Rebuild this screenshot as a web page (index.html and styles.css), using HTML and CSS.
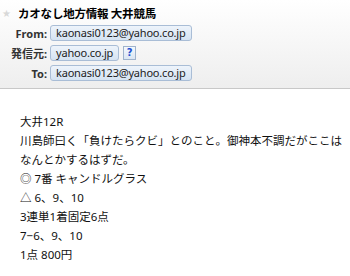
FILE: index.html
```html
<!DOCTYPE html>
<html lang="ja">
<head>
<meta charset="utf-8">
<link rel="stylesheet" href="styles.css">
</head>
<body>
<div class="header">
  <div class="subject"><span class="star">★</span><span class="title">カオなし地方情報 大井競馬</span></div>
  <div class="row"><span class="label">From:</span><span class="pill">kaonasi0123@yahoo.co.jp</span></div>
  <div class="row"><span class="label">発信元:</span><span class="pill">yahoo.co.jp</span><span class="help">?</span></div>
  <div class="row"><span class="label">To:</span><span class="pill">kaonasi0123@yahoo.co.jp</span></div>
</div>
<div class="body">
  <p>大井12R</p>
  <p>川島師曰く「負けたらクビ」とのこと。御神本不調だがここは</p>
  <p>なんとかするはずだ。</p>
  <p>◎ 7番 キャンドルグラス</p>
  <p>△ 6、9、10</p>
  <p>3連単1着固定6点</p>
  <p>7−6、9、10</p>
  <p>1点 800円</p>
</div>
</body>
</html>
```
FILE: styles.css
```css
html, body {
  margin: 0;
  padding: 0;
  background: #fff;
}
body {
  font-family: "Noto Sans", "Noto Sans CJK JP", sans-serif;
  color: #000;
  width: 350px;
  height: 276px;
  overflow: hidden;
}
.header {
  height: 88px;
  background: linear-gradient(#ffffff, #eeeeee);
  border-bottom: 1px solid #c8c8c8;
}
.subject {
  display: flex;
  align-items: center;
  height: 19px;
  padding: 4px 0 0 2px;
}
.star {
  color: #d8d8d8;
  font-size: 10px;
  width: 16px;
  line-height: 19px;
  font-family: "DejaVu Sans", sans-serif;
}
.title {
  font-family: "Noto Sans CJK JP", sans-serif;
  font-weight: bold;
  font-size: 11.5px;
  line-height: 19px;
  letter-spacing: -0.2px;
}
.row {
  display: flex;
  align-items: center;
  height: 20px;
}
.label {
  width: 47px;
  text-align: right;
  font-weight: bold;
  font-size: 11px;
  color: #333;
  padding-right: 3px;
  font-family: "Noto Sans", "Noto Sans CJK JP", sans-serif;
}
.pill {
  font-size: 11px;
  line-height: 14px;
  padding: 0 5px;
  letter-spacing: -0.2px;
  border: 1px solid #a9bdd6;
  border-radius: 3px;
  background: linear-gradient(#eef4fb, #d5e3f2);
  color: #222;
}
.help {
  margin-left: 4px;
  width: 11px;
  height: 12px;
  border: 1px solid #9fb3cc;
  background: linear-gradient(#f4f8fd, #dae6f3);
  color: #1f4fd0;
  font-weight: bold;
  font-size: 10px;
  line-height: 12px;
  text-align: center;
  font-family: "DejaVu Sans", sans-serif;
}
.body {
  padding: 23px 0 0 20px;
  font-family: "Noto Sans", "Noto Sans CJK JP", sans-serif;
  font-size: 11.5px;
  color: #111;
}
.body p {
  margin: 0;
  line-height: 19px;
  white-space: nowrap;
}
```
